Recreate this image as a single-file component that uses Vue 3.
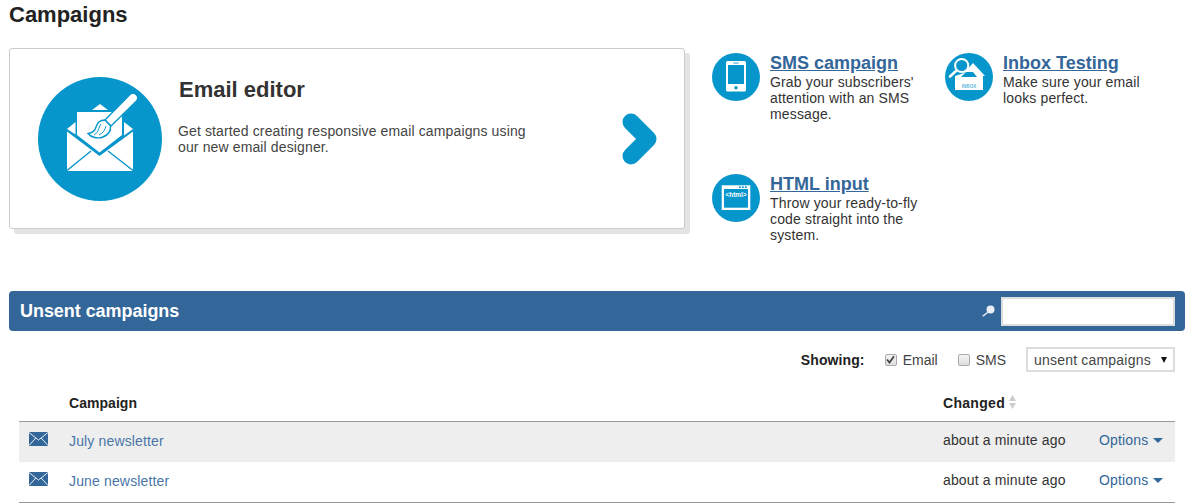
<template>
  <div class="page">
    <h1>Campaigns</h1>

    <div class="top">
      <div class="editor-card">
        <svg class="editor-icon" viewBox="38 77 124 124">
          <circle cx="100" cy="139" r="62" fill="#0796cc" />
          <polygon points="92,110 100,104 108,110" fill="#fff" />
          <polygon points="77,112 122,112 122,135 99.5,152.5 77,135" fill="#fff" />
          <polygon points="67,129 75.5,122 75.5,134.5" fill="#fff" />
          <polygon points="133,129 124,122 124,135.5" fill="#fff" />
          <polygon points="67,131.5 99.5,156 133,131.5 133,171 67,171" fill="#fff" />
          <path d="M67 170.5 L91 151 M133 170.5 L108 151" stroke="#0796cc" stroke-width="1.4" />
          <path d="M129.5 95 a4.6 4.6 0 0 1 7 6 L111 126 L105 120 Z" fill="#fff" stroke="#0796cc" stroke-width="1.4" />
          <path d="M105 120 C99 120 97 123 96 127 C95 131 93 133 88 133.5 C91 137.5 98 139 103 137 C108 135 111 131 110.5 126 Z" fill="#fff" stroke="#0796cc" stroke-width="1.4" />
          <path d="M101 124 C98 128 99 132 94 135 M106 126 C105 130 103 133 99 135" fill="none" stroke="#0796cc" stroke-width="1" />
        </svg>
        <div class="editor-text">
          <h2>Email editor</h2>
          <p>Get started creating responsive email campaigns using our new email designer.</p>
        </div>
        <svg class="chevron" width="38" height="54" viewBox="0 0 38 54">
          <polyline points="9,9 26,26 9,43" fill="none" stroke="#0796cc" stroke-width="17" stroke-linecap="round" stroke-linejoin="round" />
        </svg>
      </div>

      <div class="tiles">
        <div class="tile">
          <svg class="tile-icon" viewBox="712 53 48 48">
            <circle cx="736" cy="77" r="24" fill="#0796cc" />
            <rect x="726" y="61" width="20" height="30.5" rx="1.5" fill="#fff" />
            <rect x="728" y="65" width="16" height="19" fill="#0796cc" />
            <rect x="733.5" y="62.6" width="5" height="0.9" fill="#0796cc" />
            <circle cx="736" cy="87.7" r="1.7" fill="#0796cc" />
          </svg>
          <div class="tile-text">
            <a class="tile-title">SMS campaign</a>
            <p>Grab your subscribers' attention with an SMS message.</p>
          </div>
        </div>

        <div class="tile">
          <svg class="tile-icon" viewBox="945 53 48 48">
            <circle cx="969" cy="77" r="24" fill="#0796cc" />
            <path d="M964 73 L973 63 L985 76 H983 V80 H955 V76 Z" fill="#fff" />
            <path d="M961 77 H977 L973 72 H966 Z" fill="#0796cc" />
            <rect x="955" y="80" width="28" height="10" fill="#fff" />
            <text x="969" y="87.5" class="inbox-label">INBOX</text>
            <circle cx="961.7" cy="65.5" r="6.6" fill="#0796cc" stroke="#fff" stroke-width="2" />
            <path d="M956.5 70.5 L950 76.5" stroke="#fff" stroke-width="2.6" stroke-linecap="round" />
          </svg>
          <div class="tile-text">
            <a class="tile-title">Inbox Testing</a>
            <p>Make sure your email looks perfect.</p>
          </div>
        </div>

        <div class="tile">
          <svg class="tile-icon" viewBox="712 174 48 48">
            <circle cx="736" cy="198" r="24" fill="#0796cc" />
            <rect x="721.7" y="185.3" width="28.6" height="24.7" fill="#fff" />
            <rect x="724" y="189" width="24" height="18.7" fill="#0796cc" />
            <rect x="739" y="186.4" width="1.8" height="1.6" fill="#0796cc" />
            <rect x="742" y="186.4" width="1.8" height="1.6" fill="#0796cc" />
            <rect x="745" y="186.4" width="1.8" height="1.6" fill="#0796cc" />
            <text x="736" y="196.8" class="html-label">&lt;html&gt;</text>
          </svg>
          <div class="tile-text">
            <a class="tile-title">HTML input</a>
            <p>Throw your ready-to-fly code straight into the system.</p>
          </div>
        </div>
      </div>
    </div>

    <div class="banner">
      <h3>Unsent campaigns</h3>
      <svg class="search-icon" width="14" height="14" viewBox="0 0 14 14">
        <circle cx="8.5" cy="5.5" r="4" fill="#e8eef4" />
        <path d="M5.5 8.5 L1.2 11.8" stroke="#dfe7ef" stroke-width="1.5" stroke-linecap="round" />
      </svg>
      <input class="search" type="text" />
    </div>

    <div class="filters">
      <strong class="showing">Showing:</strong>
      <label class="check-label">
        <span class="check">
          <svg width="9" height="9" viewBox="0 0 9 9">
            <path d="M1 4.5 L3.5 7.5 L8 1.2" fill="none" stroke="#444" stroke-width="1.8" />
          </svg>
        </span>
        Email
      </label>
      <label class="check-label">
        <span class="check"></span>
        SMS
      </label>
      <div class="select-box">
        <span>unsent campaigns</span>
        <i class="select-arrow"></i>
      </div>
    </div>

    <table class="list">
      <thead>
        <tr>
          <th class="col-icon"></th>
          <th class="col-name">Campaign</th>
          <th class="col-changed">
            Changed
            <svg class="sort" width="7" height="14" viewBox="0 0 7 14">
              <polygon points="3.5,0 7,6 0,6" fill="#ccc" />
              <polygon points="0,8 7,8 3.5,14" fill="#ccc" />
            </svg>
          </th>
          <th></th>
        </tr>
      </thead>
      <tbody>
        <tr v-for="(c, i) in campaigns" :key="c" :class="{ odd: i === 0 }">
          <td class="icon-cell">
            <svg class="mail" width="19" height="14" viewBox="0 0 19 14">
              <rect width="19" height="14" fill="#336699" />
              <path d="M0 .5 L9.5 8 L19 .5 M0 13.5 L6.8 6 M19 13.5 L12.2 6" fill="none" stroke="#e8eef4" stroke-width="1" />
            </svg>
          </td>
          <td class="name-cell"><a class="name">{{ c }}</a></td>
          <td class="when">about a minute ago</td>
          <td class="opts">Options <i class="caret"></i></td>
        </tr>
      </tbody>
    </table>
  </div>
</template>

<script setup>
const campaigns = ['July newsletter', 'June newsletter']
</script>

<style>
body {
  background: #fff;
}
</style>

<style scoped>
.page {
  width: 1176px;
  padding: 0 8px 0 9px;
  font-family: "Liberation Sans", Arial, sans-serif;
  font-size: 14px;
  color: #333;
}

h1 {
  margin: 0;
  padding-top: 2px;
  font-size: 22px;
  line-height: 25px;
  color: #222;
}

.top {
  display: flex;
  margin-top: 21px;
}

.editor-card {
  box-sizing: border-box;
  width: 676px;
  height: 181px;
  display: flex;
  align-items: center;
  padding-left: 28px;
  background: #fff;
  border: 1px solid #ccc;
  border-radius: 3px;
  box-shadow: 5px 5px 0 #e4e4e4;
}

.editor-icon {
  width: 124px;
  height: 124px;
  flex: none;
}

.editor-text {
  width: 360px;
  margin-left: 16px;
  align-self: flex-start;
  padding-top: 28px;
}

h2 {
  margin: 0 0 0 1px;
  font-size: 22px;
  line-height: 25px;
  color: #333;
}

.editor-text p {
  margin: 21px 0 0;
  line-height: 16px;
  letter-spacing: 0.13px;
  color: #444;
}

.chevron {
  margin: 2px 0 0 84px;
  flex: none;
}

.tiles {
  margin-left: 27px;
  display: grid;
  grid-template-columns: 233px 233px;
  grid-template-rows: 121px 102px;
}

.tile {
  display: flex;
  padding-top: 5px;
}

.tile-icon {
  width: 48px;
  height: 48px;
  flex: none;
}

.tile-text {
  margin-left: 10px;
  width: 160px;
}

.tile-title {
  display: block;
  font-size: 18px;
  font-weight: bold;
  line-height: 21px;
  color: #336699;
  text-decoration: underline;
}

.tile-text p {
  margin: 0;
  line-height: 16px;
  letter-spacing: 0.15px;
  color: #333;
}

.inbox-label {
  font-size: 4.6px;
  font-weight: bold;
  text-anchor: middle;
  fill: #5fb9dd;
}

.html-label {
  font-size: 6.4px;
  font-weight: bold;
  text-anchor: middle;
  fill: #fff;
}

.banner {
  box-sizing: border-box;
  height: 40px;
  margin-top: 20px;
  display: flex;
  align-items: center;
  padding: 0 10px 0 11px;
  background: #336699;
  border-radius: 4px;
}

h3 {
  margin: 0;
  font-size: 18px;
  letter-spacing: -0.05px;
  color: #fff;
}

.search-icon {
  margin-left: auto;
  margin-right: 5px;
  flex: none;
}

.search {
  box-sizing: border-box;
  width: 174px;
  height: 29px;
  margin: 0;
  padding: 0;
  border: 2px solid #ddd;
  background: #fff;
}

.filters {
  display: flex;
  align-items: center;
  justify-content: flex-end;
  margin-top: 16px;
  padding-right: 10px;
  height: 25px;
}

.showing {
  letter-spacing: 0.1px;
  color: #222;
  margin-right: 20px;
}

.check-label {
  display: flex;
  align-items: center;
  gap: 6px;
  margin-right: 20px;
  color: #444;
}

.check {
  box-sizing: border-box;
  width: 12px;
  height: 12px;
  display: flex;
  align-items: center;
  justify-content: center;
  border: 1px solid #aaa;
  border-radius: 2px;
  background: linear-gradient(#f4f4f4, #dedede);
}

.select-box {
  box-sizing: border-box;
  width: 149px;
  height: 25px;
  display: flex;
  align-items: center;
  justify-content: space-between;
  padding: 0 6px 0 6px;
  border: 2px solid #ddd;
  color: #444;
  letter-spacing: 0.2px;
}

.select-arrow {
  width: 0;
  height: 0;
  border-left: 3.5px solid transparent;
  border-right: 3.5px solid transparent;
  border-top: 6px solid #111;
}

.list {
  width: 1156px;
  margin: 0 0 0 10px;
  border-collapse: collapse;
  table-layout: fixed;
  border-bottom: 1px solid #999;
}

.list th {
  height: 49px;
  padding: 14px 0 0;
  text-align: left;
  font-size: 14px;
  letter-spacing: 0.3px;
  color: #222;
  border-bottom: 1px solid #999;
  box-sizing: border-box;
}

.col-icon {
  width: 50px;
}

.list th.col-name {
  width: 874px;
  letter-spacing: 0.05px;
}

.col-changed {
  width: 156px;
}

.sort {
  vertical-align: -1px;
  margin-left: 0;
}

.list td {
  height: 40px;
  padding: 0;
  letter-spacing: 0.15px;
}

.odd {
  background: #eee;
}

.list td.icon-cell {
  padding-left: 10px;
  line-height: 0;
}

.mail {
  margin-top: -5px;
}

.list td.name-cell {
  height: 38px;
  padding-bottom: 2px;
}

.name {
  color: #4a76a8;
}

.list td.when {
  height: 36px;
  padding-bottom: 4px;
  color: #333;
}

.list td.opts {
  height: 36px;
  padding-bottom: 4px;
  color: #336699;
  white-space: nowrap;
}

.caret {
  display: inline-block;
  width: 0;
  height: 0;
  margin-left: 1px;
  vertical-align: 2px;
  border-left: 5px solid transparent;
  border-right: 5px solid transparent;
  border-top: 5px solid #336699;
}
</style>
